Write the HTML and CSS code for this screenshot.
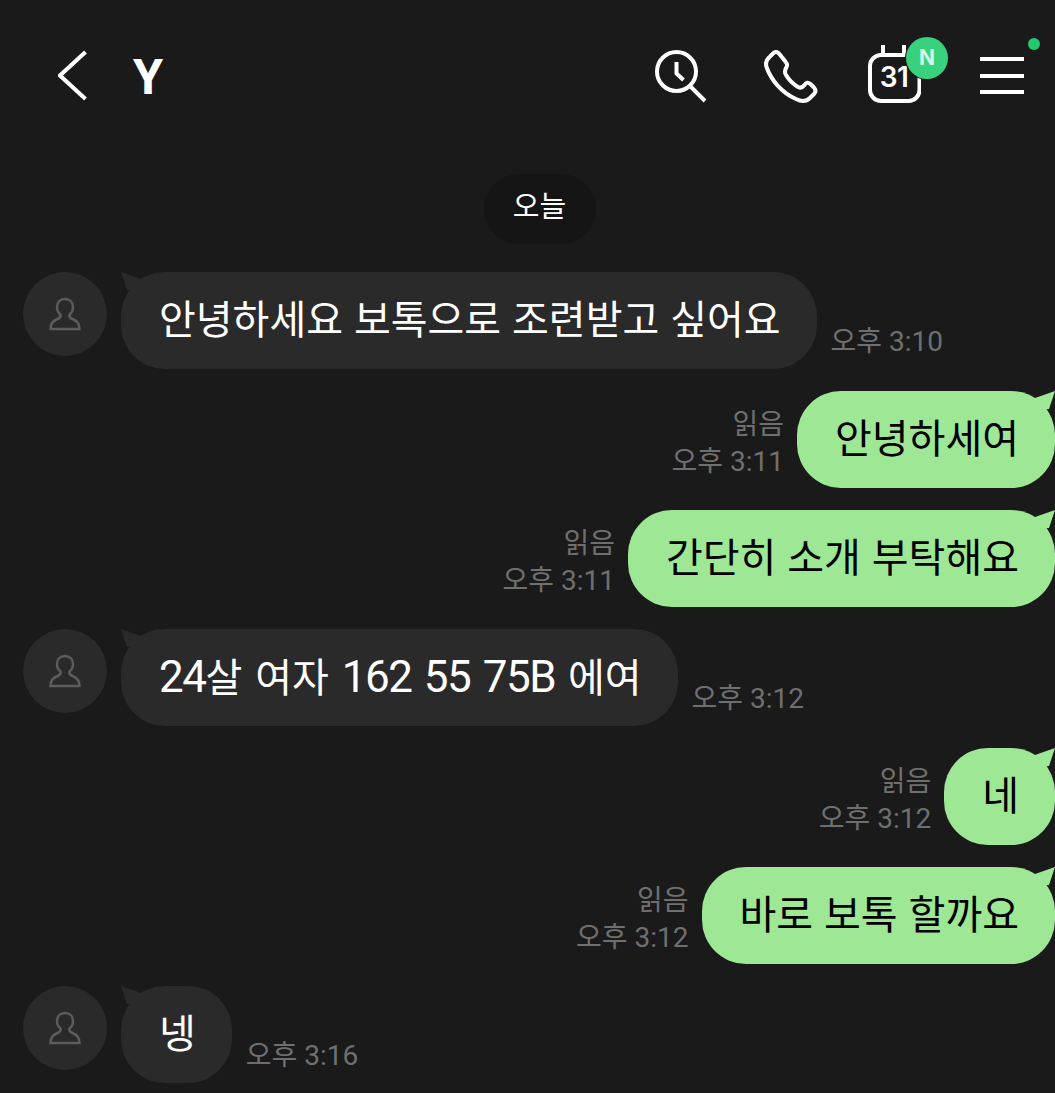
FILE: index.html
```html
<!DOCTYPE html>
<html lang="ko">
<head>
<meta charset="utf-8">
<title>Y</title>
<link rel="stylesheet" href="styles.css">
</head>
<body>
<main class="screen">
  <header class="topbar">
    <svg class="ic-back" width="30" height="52" viewBox="0 0 30 52"><path d="M27.500 2 2 25.500 27.500 49" /></svg>
    <h1 class="title">Y</h1>
    <div class="actions">
      <svg class="ic ic-search" width="54" height="54" viewBox="0 0 54 54"><circle cx="22.500" cy="21.500" r="19.500"/><path d="M35.500 35.500 51 51M22.500 12v11.500l7 6.500"/></svg>
      <svg class="ic ic-phone" width="54" height="54" viewBox="0 0 54 54"><path d="M6 6.500 9 3.500C11 1.500 13 1.500 15 3.500L21 11C23 13.500 24 15 22 18C21 20 20 22 22 25C25 30 29 34 34 37C37 38.500 39 37 40.500 35C42 32.500 44 32 46.500 34L50 37.500C52 40 52 42 50 44L46 48C43 51 38 52 32 49C18 43 7 30 2.500 17C1 12 3 9 6 6.500Z"/></svg>
      <div class="calendar">
        <svg class="ic" width="54" height="60" viewBox="0 0 54 60"><path d="M16 0v10M37 0v10"/><rect x="3" y="10" width="49.500" height="46" rx="11"/></svg>
        <span class="cal-day">31</span>
        <span class="badge-n">N</span>
      </div>
      <div class="menu">
        <span class="menu-line"></span><span class="menu-line"></span><span class="menu-line"></span>
        <span class="menu-dot"></span>
      </div>
    </div>
  </header>

  <div class="date-row"><span class="date-chip">오늘</span></div>

  <section class="chat">
    <div class="row in">
      <span class="avatar"><svg width="34" height="34" viewBox="0 0 34 34"><path d="M17 2c-5 0-8 3.500-8 8 0 3 1.500 6 3.500 7.500.5 2-.5 3.500-3 4.500-4 1.500-7 4-7 10h29c0-6-3-8.500-7-10-2.500-1-3.500-2.500-3-4.500 2-1.500 3.500-4.500 3.500-7.500 0-4.500-3-8-8-8z"/></svg></span>
      <div class="bubble">안녕하세요 보톡으로 조련받고 싶어요</div>
      <div class="meta"><span>오후 3:10</span></div>
    </div>
    <div class="row out">
      <div class="meta"><span>읽음</span><span>오후 3:11</span></div>
      <div class="bubble">안녕하세여</div>
    </div>
    <div class="row out">
      <div class="meta"><span>읽음</span><span>오후 3:11</span></div>
      <div class="bubble">간단히 소개 부탁해요</div>
    </div>
    <div class="row in">
      <span class="avatar"><svg width="34" height="34" viewBox="0 0 34 34"><path d="M17 2c-5 0-8 3.500-8 8 0 3 1.500 6 3.500 7.500.5 2-.5 3.500-3 4.500-4 1.500-7 4-7 10h29c0-6-3-8.500-7-10-2.500-1-3.500-2.500-3-4.500 2-1.500 3.500-4.500 3.500-7.500 0-4.500-3-8-8-8z"/></svg></span>
      <div class="bubble bubble-num"><span class="num">24</span>살 여자 <span class="num">162 55 75B</span> 에여</div>
      <div class="meta"><span>오후 3:12</span></div>
    </div>
    <div class="row out">
      <div class="meta"><span>읽음</span><span>오후 3:12</span></div>
      <div class="bubble">네</div>
    </div>
    <div class="row out">
      <div class="meta"><span>읽음</span><span>오후 3:12</span></div>
      <div class="bubble">바로 보톡 할까요</div>
    </div>
    <div class="row in">
      <span class="avatar"><svg width="34" height="34" viewBox="0 0 34 34"><path d="M17 2c-5 0-8 3.500-8 8 0 3 1.500 6 3.500 7.500.5 2-.5 3.500-3 4.500-4 1.500-7 4-7 10h29c0-6-3-8.500-7-10-2.500-1-3.500-2.500-3-4.500 2-1.500 3.500-4.500 3.500-7.500 0-4.500-3-8-8-8z"/></svg></span>
      <div class="bubble">넹</div>
      <div class="meta"><span>오후 3:16</span></div>
    </div>
  </section>
</main>
</body>
</html>
```

FILE: styles.css
```css
* { box-sizing: border-box; }
html, body { margin: 0; height: 100%; background: #1a1a1a; overflow: hidden; }
.screen {
  width: 1055px; height: 1093px; background: #1a1a1a; overflow: hidden;
  font-family: Roboto, "Noto Sans CJK KR", sans-serif;
}
.topbar { height: 174px; padding: 50px 31px 0 58px; display: flex; align-items: flex-start; }
.ic-back { fill: none; stroke: #fff; stroke-width: 4; }
.title { margin: 0 0 0 45px; color: #fff; font-size: 48px; line-height: 52px; font-weight: 700; font-family: "Noto Sans", sans-serif; }
.actions { margin-left: auto; display: flex; align-items: flex-start; }
.ic { fill: none; stroke: #fff; stroke-width: 4; stroke-linejoin: round; display: block; }
.ic-search { margin-right: 56px; }
.ic-phone { margin-right: 49px; }
.calendar { position: relative; width: 54px; height: 60px; margin-top: -5px; margin-right: 59px; }
.cal-day { position: absolute; left: 0; right: 0; top: 15px; text-align: center; color: #fff; font-size: 28px; line-height: 34px; font-weight: 600; font-family: Inter, sans-serif; letter-spacing: -0.5px; }
.badge-n { position: absolute; left: 39px; top: -8px; width: 42px; height: 42px; border-radius: 50%; background: #38d27e; color: #d8f8e6; font-size: 21px; line-height: 42px; font-weight: 700; text-align: center; font-family: Inter, sans-serif; box-shadow: 0 0 0 1px #1a1a1a; }
.menu { position: relative; width: 44px; padding-top: 7px; display: flex; flex-direction: column; gap: 12.500px; }
.menu-line { height: 4px; background: #fff; }
.menu-dot { position: absolute; left: 48px; top: -12px; width: 12px; height: 12px; border-radius: 50%; background: #22c96e; }

.date-row { display: flex; justify-content: center; margin-bottom: 28px; padding-left: 24px; }
.date-chip { width: 112px; height: 70px; border-radius: 35px; background: #151515; color: #fff; font-size: 29px; line-height: 66px; text-align: center; }

.chat { display: flex; flex-direction: column; gap: 22px; }
.row { display: flex; height: 97px; align-items: flex-end; }
.row.out { justify-content: flex-end; }
.avatar { flex: none; align-self: flex-start; width: 84px; height: 84px; margin: 0 14px 0 23px; border-radius: 50%; background: #2a2a2a; display: flex; align-items: center; justify-content: center; }
.avatar svg { fill: none; stroke: #5c5c5c; stroke-width: 2.500; }
.bubble { position: relative; height: 97px; padding: 0 36px 0 38px; border-radius: 44px; font-size: 40px; line-height: 97px; white-space: nowrap; word-spacing: 1px; }
.bubble-num { word-spacing: 3px; }
.num { font-size: 44px; letter-spacing: -1.500px; }
.in .bubble { background: #2a2a2a; color: #fff; }
.out .bubble { background: #9ee795; color: #000; }
.in .bubble::before { content: ""; position: absolute; left: 0; top: 0; width: 28px; height: 24px; background: #2a2a2a; clip-path: polygon(0 0, 20px 7px, 20px 20px, 6px 18px); }
.out .bubble::after { content: ""; position: absolute; right: 0; top: 0; width: 28px; height: 24px; background: #9ee795; clip-path: polygon(28px 0, 8px 7px, 8px 20px, 22px 18px); }
.meta { display: flex; flex-direction: column; color: #6f6f6f; font-size: 28px; line-height: 37px; white-space: nowrap; }
.in .meta { margin: 0 0 9px 14px; }
.out .meta { align-items: flex-end; margin: 0 13px 8px 0; }
```
